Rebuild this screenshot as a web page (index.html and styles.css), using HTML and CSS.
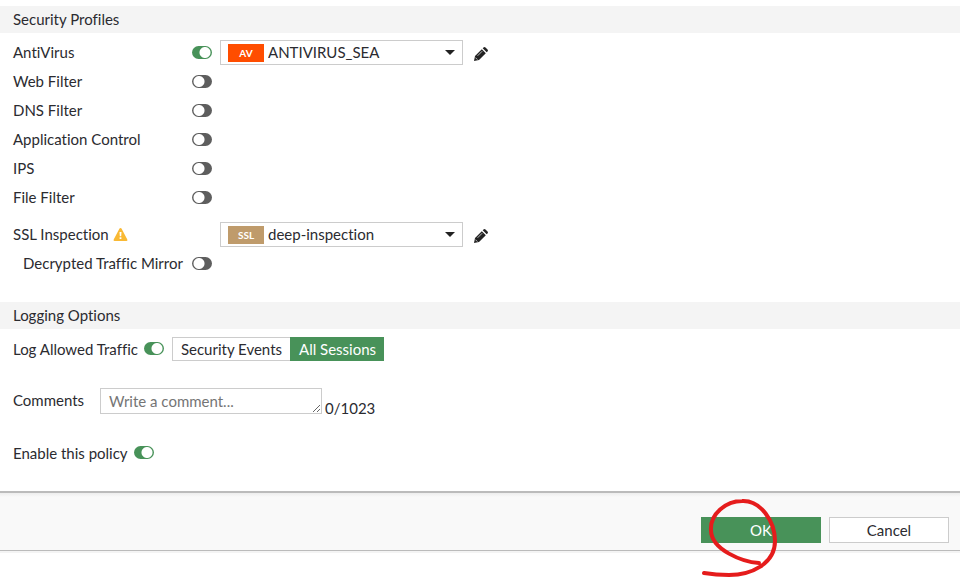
FILE: index.html
```
<!DOCTYPE html>
<html lang="en">
<head>
<meta charset="utf-8">
<title>Firewall Policy</title>
<link rel="stylesheet" href="styles.css">
</head>
<body>
<form class="policy">
  <main class="content">
    <section class="section">
      <h2 class="section-title">Security Profiles</h2>
      <div class="rows">
        <div class="row">
          <label class="name" for="av">AntiVirus</label>
          <input class="toggle" type="checkbox" id="av" checked>
          <div class="picker">
            <select aria-label="AntiVirus profile"><option>ANTIVIRUS_SEA</option></select>
            <span class="badge badge-av">AV</span>
            <svg class="caret" viewBox="0 0 10 5"><path d="M0 0h10L5 5z"/></svg>
          </div>
          <button class="edit" type="button" aria-label="Edit AntiVirus profile">
            <svg viewBox="0 0 14 14"><path d="M0 14l1-5 6.800-6.800 4 4L5 13zM8.700 1.300L9.500.5q1-.9 2 0l2 2q.9 1 0 2l-.8.8z"/><path class="edit-cut" d="M1.400 10.600l2 2M3.600 8.800l4.600-4.600"/></svg>
          </button>
        </div>
        <div class="row">
          <label class="name" for="web">Web Filter</label>
          <input class="toggle" type="checkbox" id="web">
        </div>
        <div class="row">
          <label class="name" for="dns">DNS Filter</label>
          <input class="toggle" type="checkbox" id="dns">
        </div>
        <div class="row">
          <label class="name" for="app">Application Control</label>
          <input class="toggle" type="checkbox" id="app">
        </div>
        <div class="row">
          <label class="name" for="ips">IPS</label>
          <input class="toggle" type="checkbox" id="ips">
        </div>
        <div class="row">
          <label class="name" for="file">File Filter</label>
          <input class="toggle" type="checkbox" id="file">
        </div>
        <div class="row row-ssl">
          <label class="name name-wide" for="ssl">SSL Inspection
            <svg class="warning" viewBox="0 0 14 13"><path d="M7 0q.7 0 1 .6l5.800 10.800q.6 1.600-1 1.600H1.200q-1.600 0-1-1.600L6 .6Q6.300 0 7 0z"/><path class="warning-mark" d="M6 4h2l-.3 4.300H6.300zM6.100 9.200h1.800V11H6.100z"/></svg>
          </label>
          <div class="picker">
            <select id="ssl"><option>deep-inspection</option></select>
            <span class="badge badge-ssl">SSL</span>
            <svg class="caret" viewBox="0 0 10 5"><path d="M0 0h10L5 5z"/></svg>
          </div>
          <button class="edit" type="button" aria-label="Edit SSL inspection profile">
            <svg viewBox="0 0 14 14"><path d="M0 14l1-5 6.800-6.800 4 4L5 13zM8.700 1.300L9.500.5q1-.9 2 0l2 2q.9 1 0 2l-.8.8z"/><path class="edit-cut" d="M1.400 10.600l2 2M3.600 8.800l4.600-4.600"/></svg>
          </button>
        </div>
        <div class="row">
          <label class="name name-sub" for="mirror">Decrypted Traffic Mirror</label>
          <input class="toggle" type="checkbox" id="mirror">
        </div>
      </div>
    </section>

    <section class="section">
      <h2 class="section-title">Logging Options</h2>
      <div class="rows rows-log">
        <div class="row row-inline">
          <label for="log">Log Allowed Traffic</label>
          <input class="toggle" type="checkbox" id="log" checked>
          <div class="segments">
            <button type="button" class="segment">Security Events</button>
            <button type="button" class="segment segment-on">All Sessions</button>
          </div>
        </div>
      </div>
    </section>

    <div class="comments">
      <label for="comment">Comments</label>
      <textarea id="comment" rows="1" placeholder="Write a comment..."></textarea>
      <span class="count">0/1023</span>
    </div>

    <div class="row row-inline row-enable">
      <label for="enable">Enable this policy</label>
      <input class="toggle" type="checkbox" id="enable" checked>
    </div>
  </main>

  <footer class="footer">
    <button type="submit" class="button button-primary">OK</button>
    <button type="button" class="button">Cancel</button>
    <svg class="marker" viewBox="0 0 80 82"><path d="M60 66C44 65 12 53 12 33C11 17 27 4 43 4C62 3 76 25 76 44C76 67 52 78 30 78Q17 78 5 76"/></svg>
  </footer>
</form>
</body>
</html>
```
FILE: styles.css
```
* {
  box-sizing: border-box;
}

body {
  min-height: 100vh;
  margin: 0;
  background: #fff;
  color: #2b2b30;
  font: 15px/20px Lato, sans-serif;
  font-variant-ligatures: none;
}

button,
select,
textarea {
  margin: 0;
  border: 1px solid #ccc;
  border-radius: 0;
  background: #fff;
  color: inherit;
  font: inherit;
  font-variant-ligatures: none;
}

.content {
  padding: 6px 0 24px;
}

.section-title {
  margin: 0;
  padding: 3px 13px 4px;
  background: #f4f4f4;
  font-size: 15px;
  font-weight: 400;
}

.rows {
  padding: 5px 13px 24px;
}

.rows-log {
  padding-bottom: 25px;
}

.row {
  display: flex;
  align-items: center;
  height: 29px;
}

.row-ssl {
  margin-top: 8px;
}

.row-inline {
  gap: 6px;
}

.row-enable {
  padding: 0 13px;
  margin-top: 24px;
}

.name {
  width: 179px;
  padding-bottom: 2px;
}

.name-wide {
  width: 207px;
}

.name-sub {
  padding-left: 10px;
}

.warning {
  width: 15px;
  height: 13px;
  vertical-align: -1px;
  fill: #f9b934;
}

.warning-mark {
  fill: #fff;
}

.toggle {
  appearance: none;
  flex: none;
  width: 20px;
  height: 13px;
  margin: 0;
  border-radius: 7px;
  background: radial-gradient(circle at 7px 50%, #fff 5px, #5e5e5e 6px);
}

.toggle:checked {
  background: radial-gradient(circle at 13px 50%, #fff 5px, #489259 6px);
}

.picker {
  position: relative;
  width: 243px;
}

.toggle + .picker {
  margin-left: 8px;
}

.picker select {
  display: block;
  appearance: none;
  width: 100%;
  height: 25px;
  padding: 0 24px 1px 47px;
}

.badge {
  position: absolute;
  top: 4px;
  left: 8px;
  width: 36px;
  height: 18px;
  color: #fff;
  font-size: 10px;
  font-weight: 700;
  line-height: 19px;
  text-align: center;
  pointer-events: none;
}

.badge-av {
  background: #ff4d00;
}

.badge-ssl {
  background: #bf9b6b;
}

.caret {
  position: absolute;
  top: 10px;
  right: 8px;
  width: 10px;
  height: 5px;
  fill: #222;
  pointer-events: none;
}

.edit {
  display: flex;
  margin: 3px 0 0 11px;
  padding: 0;
  border: 0;
}

.edit svg {
  width: 14px;
  height: 14px;
  fill: #222;
}

.edit .edit-cut {
  fill: none;
  stroke: #fff;
  stroke-width: 0.7;
}

.segments {
  display: flex;
  margin-left: 2px;
}

.segment {
  height: 24px;
  padding: 0 8px;
  border-right: 0;
}

.segment-on {
  border-color: #489259;
  background: #489259;
  color: #fff;
}

.comments {
  display: flex;
  align-items: flex-start;
  padding: 0 13px;
}

.comments label {
  width: 87px;
  padding-top: 2px;
}

.comments textarea {
  width: 222px;
  height: 26px;
  padding: 2px 8px;
  overflow: hidden;
  resize: both;
}

.comments textarea::placeholder {
  color: #757575;
}

.count {
  padding: 10px 0 0 3px;
  margin-bottom: -6px;
}

.footer {
  position: relative;
  display: flex;
  justify-content: flex-end;
  gap: 8px;
  padding: 24px 11px 7px;
  border-top: 2px solid #bbb;
  border-bottom: 1px solid #bbb;
  background: linear-gradient(#ededed, #f9f9f9 4px);
  box-shadow: 0 2px 0 #f4f4f4;
}

.button {
  width: 120px;
  height: 26px;
  padding: 0;
}

.button-primary {
  border-color: #489259;
  background: #489259;
  color: #fff;
}

.marker {
  position: absolute;
  top: 4px;
  right: 181px;
  width: 80px;
  height: 82px;
  fill: none;
  stroke: #e51c1c;
  stroke-width: 4;
  stroke-linecap: round;
  pointer-events: none;
}
```
